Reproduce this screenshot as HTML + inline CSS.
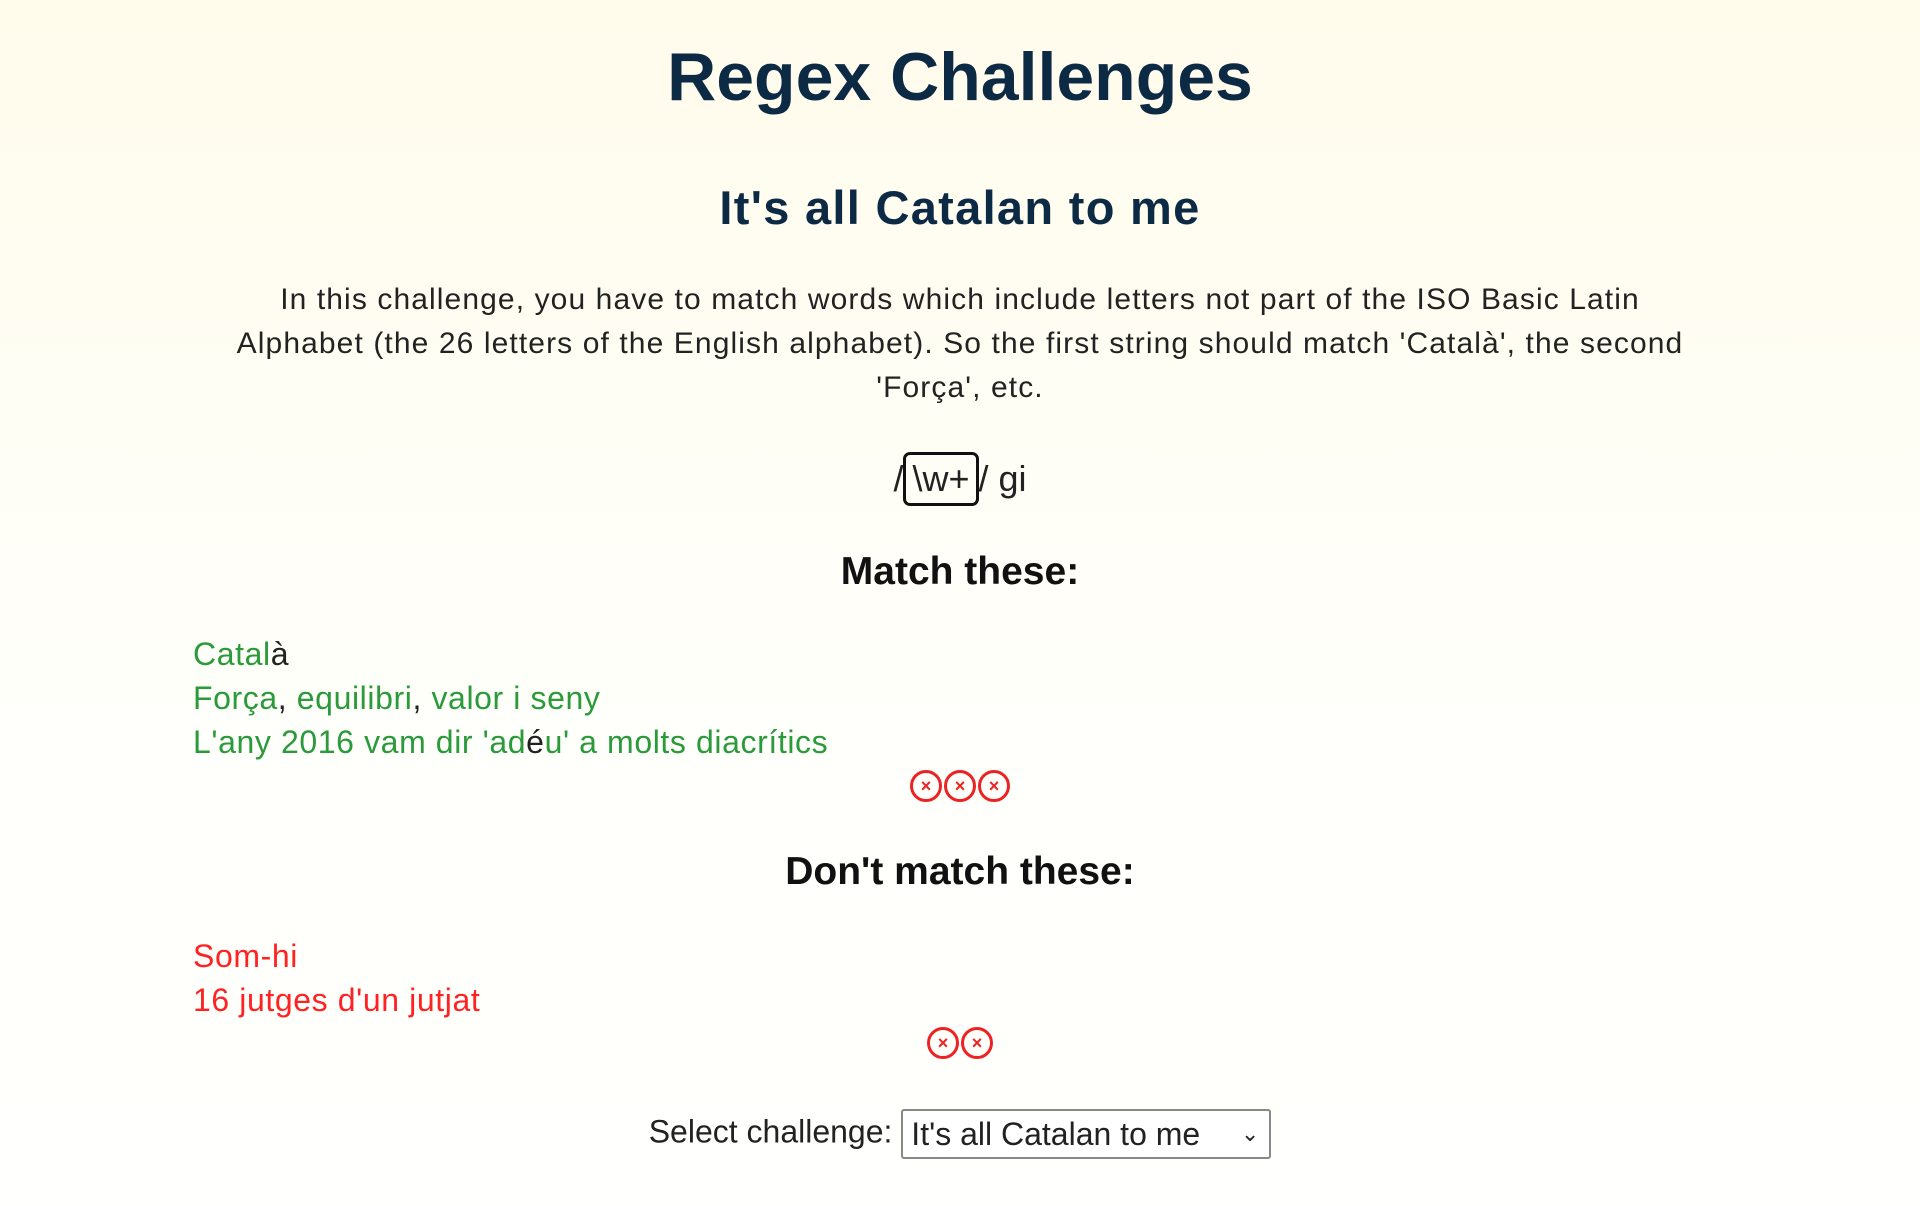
<!DOCTYPE html>
<html><head><meta charset="utf-8"><style>
html,body{margin:0;padding:0}
body{width:1920px;height:1206px;background:linear-gradient(#fffcec,#fffffb 60%,#fffffd);font-family:"Liberation Sans",sans-serif;color:#222;position:relative;overflow:hidden}
.c{position:absolute;left:0;width:1920px;text-align:center}
h1{margin:0;font-size:68px;font-weight:bold;color:#0d2a45;letter-spacing:0px}
h2{margin:0;font-size:47px;font-weight:bold;color:#0d2a45;letter-spacing:1.3px}
p{margin:0 auto;width:1700px;font-size:30px;line-height:44px;color:#222;letter-spacing:1.1px}
.h3{font-size:39px;font-weight:bold;color:#111}
.list{position:absolute;left:193px;font-size:32px;line-height:44px;letter-spacing:0.6px}
.g{color:#2a9a3a}.r{color:#f22}.k{color:#222}
.x{display:inline-block;width:26px;height:26px;border:3px solid #e22;border-radius:50%;color:#e22;font-size:18px;line-height:26px;font-weight:bold;text-align:center;margin:0 1px;box-sizing:content-box}
.box{display:inline-block;border:3px solid #111;border-radius:7px;padding:2px 6px;line-height:44px}
.sel{display:inline-block;border:2px solid #888;border-radius:3px;width:370px;height:50px;text-align:left;padding-left:8px;box-sizing:border-box;position:relative;vertical-align:middle;line-height:46px;background:#fff}
</style></head><body>
<div class="c" style="top:38px"><h1>Regex Challenges</h1></div>
<div class="c" style="top:180px"><h2>It's all Catalan to me</h2></div>
<div class="c" style="top:278px"><p>In this challenge, you have to match words which include letters not part of the ISO Basic Latin<br>Alphabet (the 26 letters of the English alphabet). So the first string should match 'Català', the second<br>'Força', etc.</p></div>
<div class="c" style="top:452px;font-size:36px">/<span class="box">\w+</span>/ gi</div>
<div class="c h3" style="top:550px">Match these:</div>
<div class="list" style="top:632px"><span class="g">Catal</span><span class="k">à</span><br><span class="g">Força</span>, <span class="g">equilibri</span>, <span class="g">valor i seny</span><br><span class="g">L'any 2016 vam dir 'ad</span><span class="k">é</span><span class="g">u' a molts diacrítics</span></div>
<div class="c" style="top:770px"><span class="x">×</span><span class="x">×</span><span class="x">×</span></div>
<div class="c h3" style="top:850px">Don't match these:</div>
<div class="list r" style="top:934px">Som-hi<br>16 jutges d'un jutjat</div>
<div class="c" style="top:1027px"><span class="x">×</span><span class="x">×</span></div>
<div class="c" style="top:1109px;font-size:32px">Select challenge: <span class="sel">It's all Catalan to me<span style="position:absolute;right:10px;top:0;font-size:22px">&#8964;</span></span></div>
</body></html>
